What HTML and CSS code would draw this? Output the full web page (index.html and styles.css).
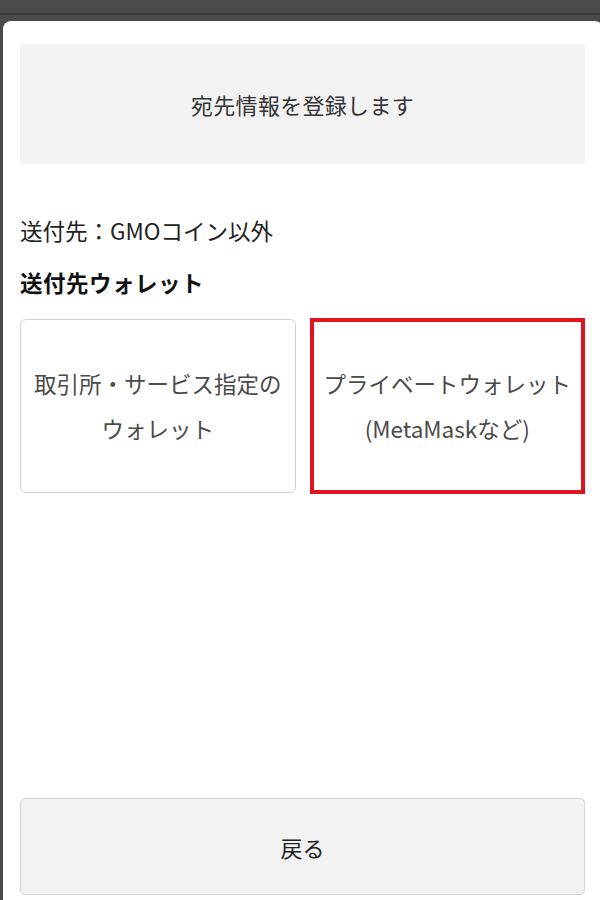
FILE: index.html
```html
<!DOCTYPE html>
<html lang="ja">
<head>
<meta charset="utf-8">
<title>宛先情報を登録します</title>
<link rel="stylesheet" href="styles.css">
</head>
<body>
<div class="backdrop">
  <div class="topbar"></div>
  <div class="modal">
    <div class="title-box">宛先情報を登録します</div>
    <div class="dest">送付先：GMOコイン以外</div>
    <div class="section-label">送付先ウォレット</div>
    <div class="choices">
      <div class="choice">取引所・サービス指定の<br>ウォレット</div>
      <div class="choice choice-selected">プライベートウォレット<br>(MetaMaskなど)</div>
    </div>
    <div class="back-btn">戻る</div>
  </div>
</div>
</body>
</html>
```
FILE: styles.css
```css
html, body {
  margin: 0;
  padding: 0;
}
body {
  width: 600px;
  height: 900px;
  overflow: hidden;
  background: #4a4a4a;
  font-family: "Noto Sans CJK JP", "Noto Sans", sans-serif;
}
.backdrop {
  display: flex;
  flex-direction: column;
  height: 900px;
}
.topbar {
  height: 13px;
  background: #4b4b4b;
  border-bottom: 2px solid #3a3a3a;
  margin-bottom: 6px;
}
.modal {
  flex: 1;
  margin-left: 3px;
  width: 600px;
  box-sizing: border-box;
  background: #fff;
  border-radius: 8px 8px 0 0;
  padding: 23px 18px 5px 17px;
  display: flex;
  flex-direction: column;
}
.title-box {
  height: 120px;
  background: #f2f2f2;
  display: flex;
  align-items: center;
  justify-content: center;
  font-size: 22px;
  color: #333;
  letter-spacing: 0.3px;
}
.dest {
  margin-top: 40px;
  line-height: 52px;
  font-size: 22.5px;
  color: #222;
}
.section-label {
  line-height: 52px;
  font-size: 22.5px;
  font-weight: bold;
  color: #111;
  letter-spacing: 0.5px;
}
.choices {
  margin-top: 11px;
  display: grid;
  grid-template-columns: 1fr 1fr;
  gap: 14px;
}
.choice {
  height: 174px;
  box-sizing: border-box;
  border: 1px solid #cfcfcf;
  border-radius: 6px;
  display: flex;
  align-items: center;
  justify-content: center;
  text-align: center;
  font-size: 22.5px;
  line-height: 45px;
  color: #4a4a4a;
  background: #fff;
}
.choice-selected {
  border: 4px solid #e2131f;
  border-radius: 0;
  margin-top: -1px;
  height: 176px;
}
.back-btn {
  margin-top: auto;
  height: 97px;
  box-sizing: border-box;
  background: #f2f2f2;
  border: 1px solid #d4d4d4;
  border-radius: 5px;
  display: flex;
  align-items: center;
  justify-content: center;
  font-size: 22px;
  color: #222;
}
```
